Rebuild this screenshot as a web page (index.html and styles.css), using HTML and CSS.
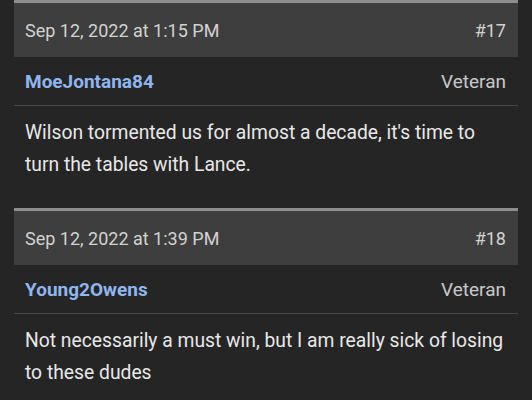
FILE: index.html
```html
<!DOCTYPE html>
<html>
<head>
<meta charset="utf-8">
<link rel="stylesheet" href="styles.css">
</head>
<body>
<div class="thread">
  <article class="post">
    <header class="post-head">
      <span class="date">Sep 12, 2022 at 1:15 PM</span>
      <span class="num">#17</span>
    </header>
    <div class="user-row">
      <span class="user">MoeJontana84</span>
      <span class="rank">Veteran</span>
    </div>
    <div class="post-body">Wilson tormented us for almost a decade, it's time to turn the tables with Lance.</div>
  </article>
  <article class="post">
    <header class="post-head">
      <span class="date">Sep 12, 2022 at 1:39 PM</span>
      <span class="num">#18</span>
    </header>
    <div class="user-row">
      <span class="user">Young2Owens</span>
      <span class="rank">Veteran</span>
    </div>
    <div class="post-body">Not necessarily a must win, but I am really sick of losing to these dudes</div>
  </article>
</div>
</body>
</html>
```
FILE: styles.css
```css
html, body {
  margin: 0;
  padding: 0;
  background: #252525;
  font-family: Roboto, "Liberation Sans", sans-serif;
}
.thread {
  padding: 0 14px;
  display: flex;
  flex-direction: column;
}
.post {
  border-top: 3px solid #8e8e8e;
}
.post-head {
  height: 54px;
  background: #3e3e3e;
  display: flex;
  align-items: center;
  justify-content: space-between;
  padding: 0 12px 0 11px;
  color: #d2d2d2;
  font-size: 18px;
}
.user-row {
  box-sizing: border-box;
  height: 49px;
  border-bottom: 1px solid #484848;
  display: flex;
  align-items: center;
  justify-content: space-between;
  padding: 0 12px 0 11px;
}
.user {
  color: #8fb6ef;
  font-weight: bold;
  font-size: 19px;
}
.rank {
  color: #c9c9c9;
  font-size: 19px;
}
.post-body {
  color: #e8e8e8;
  font-size: 19.3px;
  line-height: 32px;
  padding: 11px 12px 27px 11px;
}
```
